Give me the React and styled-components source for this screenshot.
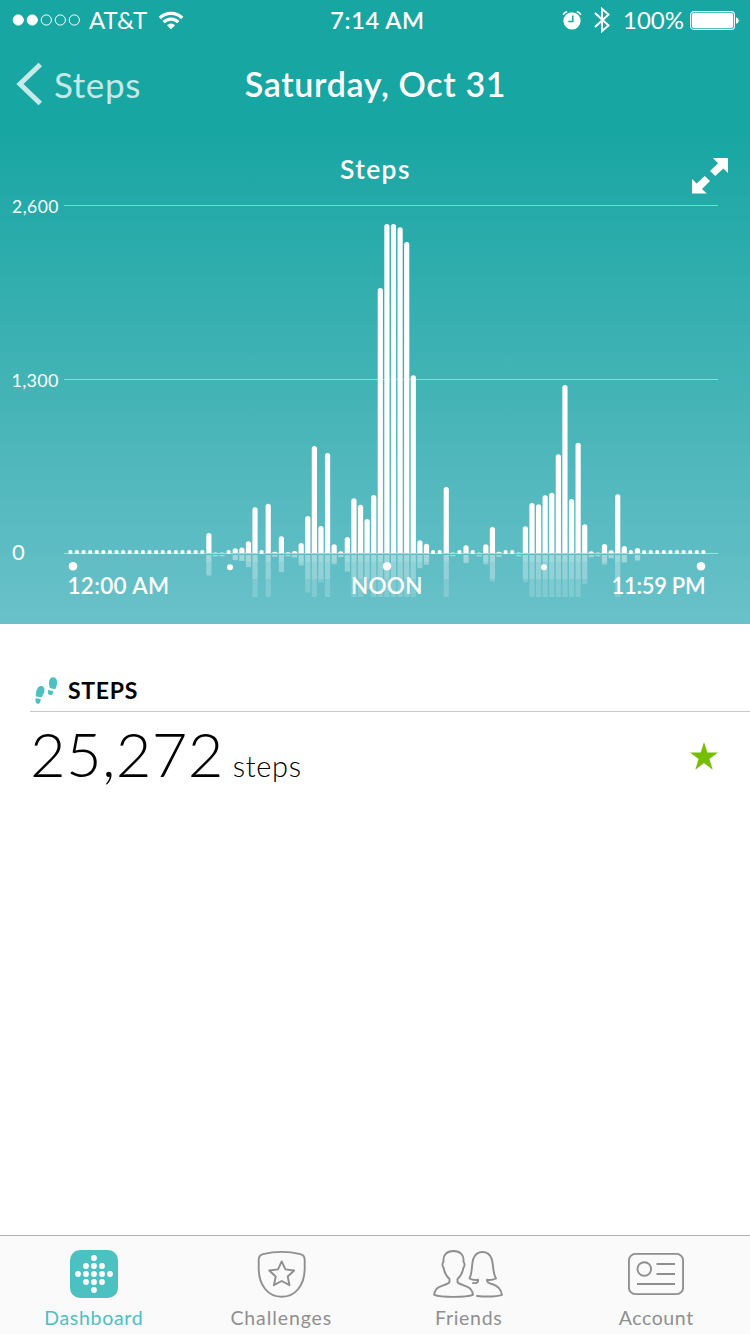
import React from "react";
import styled, { createGlobalStyle } from "styled-components";

const Global = createGlobalStyle`
  * { box-sizing: border-box; }
  body { margin: 0; background: #fff; }
`;

const Screen = styled.div`
  width: 750px;
  height: 1334px;
  display: flex;
  flex-direction: column;
  background: #fff;
  font-family: Lato, "Open Sans", sans-serif;
  overflow: hidden;
`;

const Hero = styled.header`
  height: 624px;
  display: flex;
  flex-direction: column;
  color: #fff;
  background: linear-gradient(#18a6a3 0, #18a6a3 130px, #45b4b7 400px, #6ac1ca 624px);
`;

const StatusBar = styled.div`
  height: 41px;
  display: grid;
  grid-template-columns: 1fr auto 1fr;
  align-items: center;
  padding: 0 11px 0 12px;
`;

const StatusGroup = styled.div`
  display: flex;
  align-items: center;
  justify-content: ${(p) => (p.$end ? "flex-end" : "flex-start")};
`;

const Label = styled.span`
  font-size: ${(p) => p.$size}px;
  font-weight: ${(p) => p.$weight || 400};
  letter-spacing: ${(p) => p.$track || 0}px;
  line-height: 1.2;
  white-space: nowrap;
`;

const NavBar = styled.nav`
  height: 87px;
  display: grid;
  grid-template-columns: 1fr auto 1fr;
  align-items: center;
  padding: 0 15px 0 16px;
`;

const Back = styled.div`
  display: flex;
  align-items: center;
  gap: 11px;
  padding-bottom: 2px;
  color: rgba(255, 255, 255, 0.76);
`;

const ChartSvg = styled.svg`
  display: block;
  width: 750px;
  height: 496px;
  font-family: Lato, "Open Sans", sans-serif;
`;

const Summary = styled.main`
  flex: 1;
  padding: 50px 0 0 30px;
`;

const SummaryHead = styled.div`
  height: 38px;
  display: flex;
  align-items: center;
  gap: 10px;
  padding: 0 0 3px 5px;
  border-bottom: 1px solid #c8c8c8;
  color: #000;
`;

const SummaryRow = styled.div`
  height: 88px;
  display: flex;
  align-items: center;
  justify-content: space-between;
  padding: 0 32px 0 0;
`;

const Total = styled.div`
  display: flex;
  align-items: baseline;
  gap: 9px;
  padding-bottom: 5px;
  color: #000;
`;

const TabBar = styled.footer`
  height: 99px;
  display: grid;
  grid-template-columns: repeat(4, 1fr);
  background: #fafafa;
  border-top: 1px solid #b0b0b0;
`;

const Tab = styled.div`
  display: flex;
  flex-direction: column;
  align-items: center;
  padding-top: 12px;
  gap: 6px;
  color: ${(p) => (p.$active ? "#4cc1c2" : "#8f8f8f")};
`;

/* y coordinate of each bar's top; "d" is an idle dot, "f" a near-zero bar */
const idle = (n) => Array(n).fill("d");
const bars = [
  ...idle(21), 533, "f", "f", "d", 548.3, 547.6, 541.3, 507.3, "d", 503.7, 551.7, 536.3, 552.3, 551,
  543, 516, 446, 526, 453, 544.3, 551.3, 537, 498.3, 504.7, 519, 495, 288, 224, 224, 227.3, 242, 375.3,
  540.3, 543.7, "d", "d", 487, "f", "d", 545.3, "d", "f", 544.3, 527, 551.7, "d", "d", "f",
  526.3, 503, 504.3, 495.3, 492.7, 454.3, 385, 499, 442.7, 524.3, 551.3, "f", 544, 550.3, 494.3, 546, "d", 548,
  ...idle(10),
];

const BASE = 553.5;

function Bar({ i, v }) {
  const cx = 70.4 + i * 6.594;
  if (v === "d") return <circle cx={cx} cy={552} r={2.1} fill="#fff" />;
  const top = v === "f" ? 552.6 : v;
  const h = BASE - top;
  const r = Math.min(2.5, h / 2 + 0.5);
  const x = cx - 2.6;
  const w = 5.2;
  const shoulder = Math.min(top + r, BASE - 0.5);
  const end = 555 + Math.min(Math.max(h, 1.3), 42);
  return (
    <g fill="#fff">
      <path d={`M${x} ${BASE - 0.5}V${shoulder}Q${x} ${top} ${cx} ${top}Q${x + w} ${top} ${x + w} ${shoulder}V${BASE - 0.5}Z`} />
      <rect x={x} y={555} width={w} height={Math.min(end, 562) - 555} opacity={0.4} />
      {end > 562 && <rect x={x} y={562} width={w} height={Math.min(end, 579) - 562} opacity={0.31} />}
      {end > 579 && <rect x={x} y={579} width={w} height={end - 579} opacity={0.18} />}
    </g>
  );
}

function StepsChart() {
  return (
    <ChartSvg viewBox="0 128 750 496">
      <g stroke="#fff" strokeOpacity="0.45">
        <path d="M64 205.5H718M64 379.5H718M64 553.5H718" />
      </g>
      {bars.map((v, i) => (
        <Bar key={i} i={i} v={v} />
      ))}
      <g fill="#fff">
        <circle cx="73" cy="566.3" r="4.3" />
        <circle cx="230" cy="567.3" r="3" />
        <circle cx="387" cy="566.3" r="4.3" />
        <circle cx="544" cy="567.3" r="3" />
        <circle cx="701" cy="566.3" r="4.3" />
        <text x="340" y="178.5" fontSize="26.5" fontWeight="600" textLength="69.5">Steps</text>
        <text x="12" y="213" fontSize="17.5" textLength="46.5">2,600</text>
        <text x="11.5" y="387" fontSize="18" textLength="47">1,300</text>
        <text x="12" y="559.5" fontSize="22">0</text>
        <text x="67.5" y="594" fontSize="22.5" fontWeight="600" textLength="101.5">12:00 AM</text>
        <text x="351" y="594" fontSize="22.5" fontWeight="600" textLength="71.5">NOON</text>
        <text x="611.5" y="594" fontSize="22" fontWeight="600" textLength="94">11:59 PM</text>
        <path d="M713 158H728V173L723.4 168.5L715.2 176L710 171L718 163.2ZM692 179L696.6 183.6L704.8 176L710 181L702 189L706.8 193.6H692Z" />
      </g>
    </ChartSvg>
  );
}

const Signal = () => (
  <svg width="70" height="12" viewBox="0 0 70 12" fill="#fff" stroke="#fff">
    {[0, 1, 2, 3, 4].map((n) => (
      <circle key={n} cx={6.3 + n * 14} cy="6" r="5.1" strokeWidth="1" fill={n < 2 ? "#fff" : "none"} />
    ))}
  </svg>
);

const Wifi = () => (
  <svg width="26" height="20" viewBox="0 0 26 20" fill="none" stroke="#fff" strokeWidth="3.2">
    <path d="M1.8 8A16 16 0 0 1 24.2 8M5.6 12.2A10.5 10.5 0 0 1 20.4 12.2" />
    <path d="M13 19.3L8.9 15.2Q13 11.8 17.1 15.2Z" fill="#fff" stroke="none" />
  </svg>
);

const Alarm = () => (
  <svg width="20" height="20" viewBox="0 0 20 20">
    <circle cx="10" cy="10.8" r="8.6" fill="#fff" />
    <path d="M1.2 5Q2 2.4 5.2 1.7M18.8 5Q18 2.4 14.8 1.7" stroke="#fff" strokeWidth="1.5" fill="none" />
    <path d="M10.8 5.5V11.6H6.3" stroke="#18a6a3" strokeWidth="1.5" fill="none" />
  </svg>
);

const Bluetooth = () => (
  <svg width="18" height="28" viewBox="0 0 18 28" fill="none" stroke="#fff" strokeWidth="2">
    <path d="M2 7L15.5 19.5L9 25V3L15.5 8.5L2 21" />
  </svg>
);

const Battery = () => (
  <svg width="49" height="19" viewBox="0 0 49 19">
    <rect x="0.6" y="0.6" width="43.8" height="17.8" rx="3.2" fill="none" stroke="#fff" strokeWidth="1.1" />
    <rect x="1.9" y="1.9" width="41.2" height="15.2" rx="2" fill="#fff" />
    <path d="M46 6.3Q48.8 7 48.8 9.5T46 12.7Z" fill="#fff" />
  </svg>
);

const Chevron = () => (
  <svg width="27" height="42" viewBox="0 0 27 42">
    <path d="M24.3 1.5L4 21L24.3 40.5" fill="none" stroke="currentColor" strokeWidth="5" />
  </svg>
);

const Feet = () => (
  <svg width="23" height="28" viewBox="0 0 23 28" fill="#4cc1c2">
    <path d="M5.4 9C8.6 8.6 9.8 11 9.4 14C8.9 16.7 7.4 18.6 6.6 20.3L0.9 19.5C0.6 15.5 2 9.5 5.4 9Z" />
    <path d="M0.5 21.2L5.7 22C5.6 25 4.8 26.9 3 26.8C0.9 26.7 0.3 24.7 0.5 21.2Z" />
    <path d="M18 0.3C21.3 0.2 22.4 3.5 22 6.5C21.7 9 21 10.6 20.2 12.3L14.8 11C14.5 8.7 13.7 6.7 14.1 4.4C14.5 1.9 15.8 0.4 18 0.3Z" />
    <path d="M13.2 12.9L18.4 14.3C18.2 16.9 17.2 18.4 15.3 18.1C13 17.8 12.4 15.5 13.2 12.9Z" />
  </svg>
);

const Star = () => (
  <svg width="28" height="28" viewBox="0 0 28 28" fill="#75bf00">
    <path d="M14 0L17.3 10.5H28L19.4 17L22.7 27.7L14 21.1L5.3 27.7L8.6 17L0 10.5H10.7Z" />
  </svg>
);

const dots = [[24, 8], [16, 16], [24, 16], [32, 16], [8, 24], [16, 24], [24, 24], [32, 24], [40, 24], [16, 32], [24, 32], [32, 32], [24, 40]];

const DashboardIcon = () => (
  <svg width="48" height="52" viewBox="0 0 48 52">
    <rect y="2" width="48" height="48" rx="10" fill="#4cc1c2" />
    {dots.map(([x, y]) => (
      <circle key={x + "-" + y} cx={x} cy={y + 2} r="2.9" fill="#fff" />
    ))}
  </svg>
);

const ChallengesIcon = () => (
  <svg width="50" height="52" viewBox="-0.7 0 50 52" fill="none" stroke="currentColor" strokeWidth="1.9" strokeLinejoin="round">
    <path d="M6.2 6.2C18.5 3.1 31.5 3.1 43.8 6.2Q48 7.3 48 12V20C48 37 39 48.8 25 48.8S2 37 2 20V12Q2 7.3 6.2 6.2Z" />
    <path d="M25 13.4L28.7 21.4L37.5 22.5L31 28.5L32.8 37.2L25 33L17.2 37.2L19 28.5L12.5 22.5L21.3 21.4Z" />
  </svg>
);

const FriendsIcon = () => (
  <svg width="72" height="52" viewBox="0 0 72 52" fill="none" stroke="currentColor" strokeWidth="1.9" strokeLinejoin="round" strokeLinecap="round">
    <path d="M16.5 34V31C12.5 27.5 11.3 24 10.7 20C8.8 18 9.4 14.5 10.6 13.8C9.5 7 14 3 20.5 3S31.5 7 30.4 13.8C31.6 14.5 32.2 18 30.3 20C29.7 24 28.5 27.5 24.5 31V34C26 37 34 37 37.5 41C39.5 43.5 40 45.5 40 46.8C33 49.5 8 49.5 1.2 46.8C1.2 45.5 1.5 43.5 3.5 41C7 37 15 37 16.5 34Z" />
    <path d="M40 35C44 35.5 45.5 34 45 31.8Q40 32.5 36.5 30.5C39.5 25 38.5 15 40.5 10.5Q43 4 49.5 4T58.5 10.5C60.5 15 59.5 25 63 30.5Q59 32.5 54 31.8C53.5 35 56 35 59 36Q67.5 38.5 69 46.8Q61 49.5 44 48" />
  </svg>
);

const AccountIcon = () => (
  <svg width="56" height="52" viewBox="0 0 56 52" fill="none" stroke="currentColor" strokeWidth="1.9">
    <rect x="0.9" y="5.9" width="54.2" height="40.2" rx="6.5" />
    <circle cx="16.3" cy="21" r="6.8" />
    <path d="M28.5 16H47M28.5 26H47M9 36H47" />
  </svg>
);

const tabs = [
  { name: "Dashboard", Icon: DashboardIcon, track: 0.7, active: true },
  { name: "Challenges", Icon: ChallengesIcon, track: 0.9 },
  { name: "Friends", Icon: FriendsIcon, track: 0.7 },
  { name: "Account", Icon: AccountIcon, track: 0.6 },
];

const CarrierLabel = styled(Label)`
  margin: 0 11px 0 7px;
`;
const TimeLabel = styled(Label)`
  padding-left: 4px;
`;
const BatteryLabel = styled(Label)`
  margin: 0 6px 0 12px;
`;
const AlarmSlot = styled.div`
  display: flex;
  margin-right: 11px;
`;

export default function App() {
  return (
    <Screen>
      <Global />
      <Hero>
        <StatusBar>
          <StatusGroup>
            <Signal />
            <CarrierLabel $size={24}>AT&amp;T</CarrierLabel>
            <Wifi />
          </StatusGroup>
          <TimeLabel $size={23.5} $weight={600} $track={0.6}>7:14 AM</TimeLabel>
          <StatusGroup $end>
            <AlarmSlot><Alarm /></AlarmSlot>
            <Bluetooth />
            <BatteryLabel $size={24}>100%</BatteryLabel>
            <Battery />
          </StatusGroup>
        </StatusBar>
        <NavBar>
          <Back>
            <Chevron />
            <Label $size={35} $track={0.6}>Steps</Label>
          </Back>
          <Label $size={34} $weight={600} $track={0.65}>Saturday, Oct 31</Label>
        </NavBar>
        <StepsChart />
      </Hero>
      <Summary>
        <SummaryHead>
          <Feet />
          <Label $size={23} $weight={700} $track={0.7}>STEPS</Label>
        </SummaryHead>
        <SummaryRow>
          <Total>
            <Label $size={61.5} $weight={300} $track={0.3}>25,272</Label>
            <Label $size={29} $weight={300} $track={0.7}>steps</Label>
          </Total>
          <Star />
        </SummaryRow>
      </Summary>
      <TabBar>
        {tabs.map(({ name, Icon, track, active }) => (
          <Tab key={name} $active={active}>
            <Icon />
            <Label $size={19.5} $track={track}>{name}</Label>
          </Tab>
        ))}
      </TabBar>
    </Screen>
  );
}
